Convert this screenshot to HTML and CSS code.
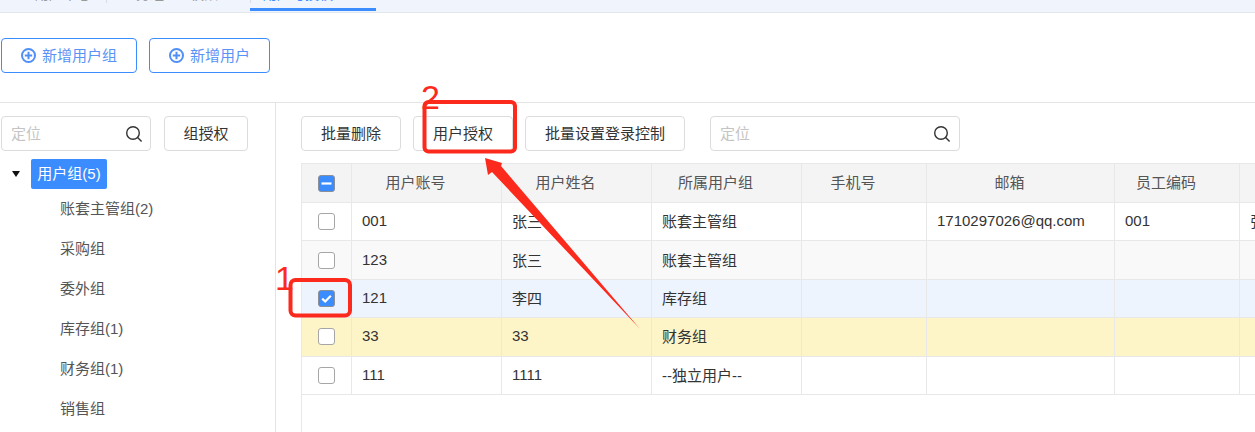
FILE: index.html
```html
<!DOCTYPE html>
<html lang="zh-CN">
<head>
<meta charset="utf-8">
<title>用户授权</title>
<link rel="stylesheet" href="styles.css">
</head>
<body>
<div class="page">
  <nav class="tabs">
    <div class="tab tab-first"><span>用户中心</span></div>
    <i class="tab-sep"></i>
    <div class="tab tab-second"><span>业务组</span><span>权限</span></div>
    <i class="tab-sep tab-sep-last"></i>
    <div class="tab tab-active"><span>用户与授权</span></div>
  </nav>

  <div class="toolbar">
    <button class="btn btn-primary">
      <svg class="plus" viewBox="0 0 15 15"><circle cx="7.5" cy="7.5" r="6.5"/><path d="M7.5 3.8v7.4M3.8 7.5h7.4"/></svg>
      <span class="btn-text">新增用户组</span>
    </button>
    <button class="btn btn-primary">
      <svg class="plus" viewBox="0 0 15 15"><circle cx="7.5" cy="7.5" r="6.5"/><path d="M7.5 3.8v7.4M3.8 7.5h7.4"/></svg>
      <span class="btn-text">新增用户</span>
    </button>
  </div>

  <div class="main">
    <aside class="side">
      <div class="side-actions">
        <div class="search search-small">
          <span class="placeholder">定位</span>
          <svg class="glass" viewBox="0 0 18 18"><circle cx="8" cy="8" r="6.3"/><path d="M12.6 12.6l4 4"/></svg>
        </div>
        <button class="btn btn-group"><span class="btn-text">组授权</span></button>
      </div>
      <div class="tree-root">
        <span class="caret"></span>
        <span class="root-label">用户组(5)</span>
      </div>
      <ul class="tree">
        <li>账套主管组(2)</li>
        <li>采购组</li>
        <li>委外组</li>
        <li>库存组(1)</li>
        <li>财务组(1)</li>
        <li>销售组</li>
      </ul>
    </aside>

    <section class="content">
      <div class="actions">
        <button class="btn"><span class="btn-text">批量删除</span></button>
        <button class="btn"><span class="btn-text">用户授权</span></button>
        <button class="btn"><span class="btn-text">批量设置登录控制</span></button>
        <div class="search search-large">
          <span class="placeholder">定位</span>
          <svg class="glass" viewBox="0 0 18 18"><circle cx="8" cy="8" r="6.3"/><path d="M12.6 12.6l4 4"/></svg>
        </div>
      </div>

      <div class="grid">
        <div class="row row-head">
          <div class="cell cell-check"><span class="cb cb-on"><svg viewBox="0 0 15 15"><path class="mark-minus" d="M2.5 7.5h10"/></svg></span></div>
          <div class="cell">用户账号</div>
          <div class="cell">用户姓名</div>
          <div class="cell">所属用户组</div>
          <div class="cell">手机号</div>
          <div class="cell">邮箱</div>
          <div class="cell">员工编码</div>
          <div class="cell"></div>
        </div>
        <div class="row">
          <div class="cell cell-check"><span class="cb"></span></div>
          <div class="cell">001</div>
          <div class="cell">张三</div>
          <div class="cell">账套主管组</div>
          <div class="cell"></div>
          <div class="cell">1710297026@qq.com</div>
          <div class="cell">001</div>
          <div class="cell">张三</div>
        </div>
        <div class="row row-even">
          <div class="cell cell-check"><span class="cb"></span></div>
          <div class="cell">123</div>
          <div class="cell">张三</div>
          <div class="cell">账套主管组</div>
          <div class="cell"></div>
          <div class="cell"></div>
          <div class="cell"></div>
          <div class="cell"></div>
        </div>
        <div class="row row-selected">
          <div class="cell cell-check"><span class="cb cb-on"><svg viewBox="0 0 15 15"><path class="mark-check" d="M3.2 7.6l3 2.9 5.6-5.8"/></svg></span></div>
          <div class="cell">121</div>
          <div class="cell">李四</div>
          <div class="cell">库存组</div>
          <div class="cell"></div>
          <div class="cell"></div>
          <div class="cell"></div>
          <div class="cell"></div>
        </div>
        <div class="row row-warn">
          <div class="cell cell-check"><span class="cb"></span></div>
          <div class="cell">33</div>
          <div class="cell">33</div>
          <div class="cell">财务组</div>
          <div class="cell"></div>
          <div class="cell"></div>
          <div class="cell"></div>
          <div class="cell"></div>
        </div>
        <div class="row">
          <div class="cell cell-check"><span class="cb"></span></div>
          <div class="cell">111</div>
          <div class="cell">1111</div>
          <div class="cell">--独立用户--</div>
          <div class="cell"></div>
          <div class="cell"></div>
          <div class="cell"></div>
          <div class="cell"></div>
        </div>
      </div>
    </section>
  </div>

  <svg class="marks" viewBox="0 0 1255 432">
    <rect class="mark-box" x="290.5" y="280" width="59.5" height="35.5" rx="5"/>
    <rect class="mark-box" x="424.5" y="102" width="90.5" height="49.5" rx="4"/>
    <polygon class="mark-fill" points="485,158 502,163 501,166 640,329 492,172 488,175"/>
    <text class="mark-num" x="275" y="290">1</text>
    <text class="mark-num" x="421" y="109">2</text>
  </svg>
</div>
</body>
</html>
```

FILE: styles.css
```css
* { box-sizing: border-box; }

html, body {
  margin: 0;
  padding: 0;
  height: 100%;
  overflow: hidden;
  background: #fff;
}

body {
  font-family: "Liberation Sans", "Noto Sans CJK SC", sans-serif;
  font-size: 15px;
  color: #333;
}

.page {
  position: relative;
  width: 1255px;
  height: 432px;
  overflow: hidden;
  display: flex;
  flex-direction: column;
}

/* Tabs, scrolled almost out of the top of the picture */
.tabs {
  flex: none;
  height: 13px;
  padding-bottom: 1px;
  display: flex;
  background: #f0f5fd;
  border-bottom: 1px solid #e2e7ee;
  overflow: hidden;
}

.tab {
  height: 11px;
  display: flex;
  align-items: flex-end;
  font-size: 14px;
  line-height: 14px;
  color: #999;
}

.tab span { padding-bottom: 10px; white-space: nowrap; }

.tab-sep {
  flex: none;
  width: 1px;
  height: 3px;
  background: #d8dce2;
}

.tab-sep-last { margin-right: -1px; }

.tab-first {
  width: 106px;
  padding-left: 35px;
}

.tab-second {
  width: 143px;
  padding-left: 15px;
  gap: 26px;
}

.tab-active {
  width: 126px;
  padding-left: 13px;
  color: #3b8cff;
  border-bottom: 3px solid #3b8cff;
}

.tab-active span { padding-bottom: 7px; }

/* Top toolbar */
.toolbar {
  flex: none;
  height: 90px;
  padding: 25px 0 0 1px;
  display: flex;
  align-items: flex-start;
  gap: 12px;
  border-bottom: 1px solid #e4e4e4;
}

.btn {
  height: 35px;
  padding: 0 19px;
  display: inline-flex;
  align-items: center;
  justify-content: center;
  flex: none;
  font: inherit;
  color: #333;
  background: #fff;
  border: 1px solid #dcdcdc;
  border-radius: 4px;
}

.btn-text { padding-bottom: 3px; }

.btn-primary {
  gap: 6px;
  color: #5a93f5;
  border-color: #3b8cff;
}

.btn-group { width: 84px; padding: 0; }

.plus { width: 15px; height: 15px; }
.plus circle, .plus path { fill: none; stroke: #4f8ff7; stroke-width: 2; }

/* Main split */
.main {
  flex: 1;
  min-height: 0;
  display: flex;
}

.side {
  flex: none;
  width: 276px;
  padding: 13px 0 0 1px;
  border-right: 1px solid #e4e4e4;
}

.side-actions {
  display: flex;
  gap: 13px;
}

.search {
  height: 35px;
  flex: none;
  padding: 0 8px 0 9px;
  display: flex;
  align-items: center;
  justify-content: space-between;
  border: 1px solid #dcdcdc;
  border-radius: 4px;
}

.search-small { width: 150px; padding-right: 7px; }
.search-large { width: 250px; margin-left: 13px; }

.placeholder { color: #c4c4c4; padding-bottom: 2px; }

.glass { width: 18px; height: 18px; }
.glass circle, .glass path { fill: none; stroke: #333; stroke-width: 1.4; }

.tree-root {
  margin-top: 8px;
  height: 30px;
  display: flex;
  align-items: center;
}

.caret {
  margin-left: 11px;
  width: 0;
  height: 0;
  border-left: 4.5px solid transparent;
  border-right: 4.5px solid transparent;
  border-top: 6px solid #111;
}

.root-label {
  margin-left: 10px;
  flex: none;
  width: 76px;
  height: 30px;
  line-height: 29px;
  text-align: center;
  color: #fff;
  background: #3b8cff;
  border-radius: 2px;
  white-space: nowrap;
  transform: translateX(1px);
}

.tree {
  list-style: none;
  margin: 0;
  padding: 0 0 0 59px;
  color: #555;
}

.tree li {
  height: 40px;
  line-height: 40px;
}

/* Right pane */
.content {
  flex: 1;
  min-width: 0;
  padding: 13px 0 0 25px;
  display: flex;
  flex-direction: column;
  gap: 12px;
}

.actions {
  flex: none;
  display: flex;
  gap: 12px;
}

.grid {
  flex: 1;
  border-left: 1px solid #e8e8e8;
  overflow: hidden;
}

.row {
  display: grid;
  grid-template-columns: 49px 150px 150px 150px 125px 188px 125px 200px;
  width: 987px;
  height: 38.4px;
  border-bottom: 1px solid #e8e8e8;
}

.row-head {
  height: 40px;
  background: #f4f4f4;
  border-top: 1px solid #e8e8e8;
  color: #555;
}

.row-even { background: #f9f9f9; }
.row-selected { background: #edf4fe; }
.row-warn { background: #fdf5c8; }

.cell {
  padding: 0 0 2px 10px;
  display: flex;
  align-items: center;
  border-left: 1px solid #e8e8e8;
  white-space: nowrap;
  overflow: hidden;
}

.row-head .cell {
  padding: 0 22px 4px 0;
  justify-content: center;
}

.row .cell-check {
  padding: 0;
  justify-content: center;
  border-left: 0;
}

.cb {
  width: 17px;
  height: 17px;
  display: block;
  background: #fff;
  border: 1px solid #a6a6a6;
  border-radius: 3px;
}

.cb-on { background: #3b8cff; border-color: #8a8f98; }
.cb svg { display: block; width: 15px; height: 15px; }

.mark-minus, .mark-check { fill: none; stroke: #fff; stroke-width: 2.2; }

/* Red annotations over the screenshot */
.marks {
  position: absolute;
  left: 0;
  top: 0;
  width: 1255px;
  height: 432px;
  pointer-events: none;
}

.mark-box { fill: none; stroke: #fb2a1c; stroke-width: 4; }
.mark-fill { fill: #fb2a1c; }

.mark-num {
  font-family: "Liberation Sans", sans-serif;
  font-size: 34px;
  fill: #fb2a1c;
}
```
